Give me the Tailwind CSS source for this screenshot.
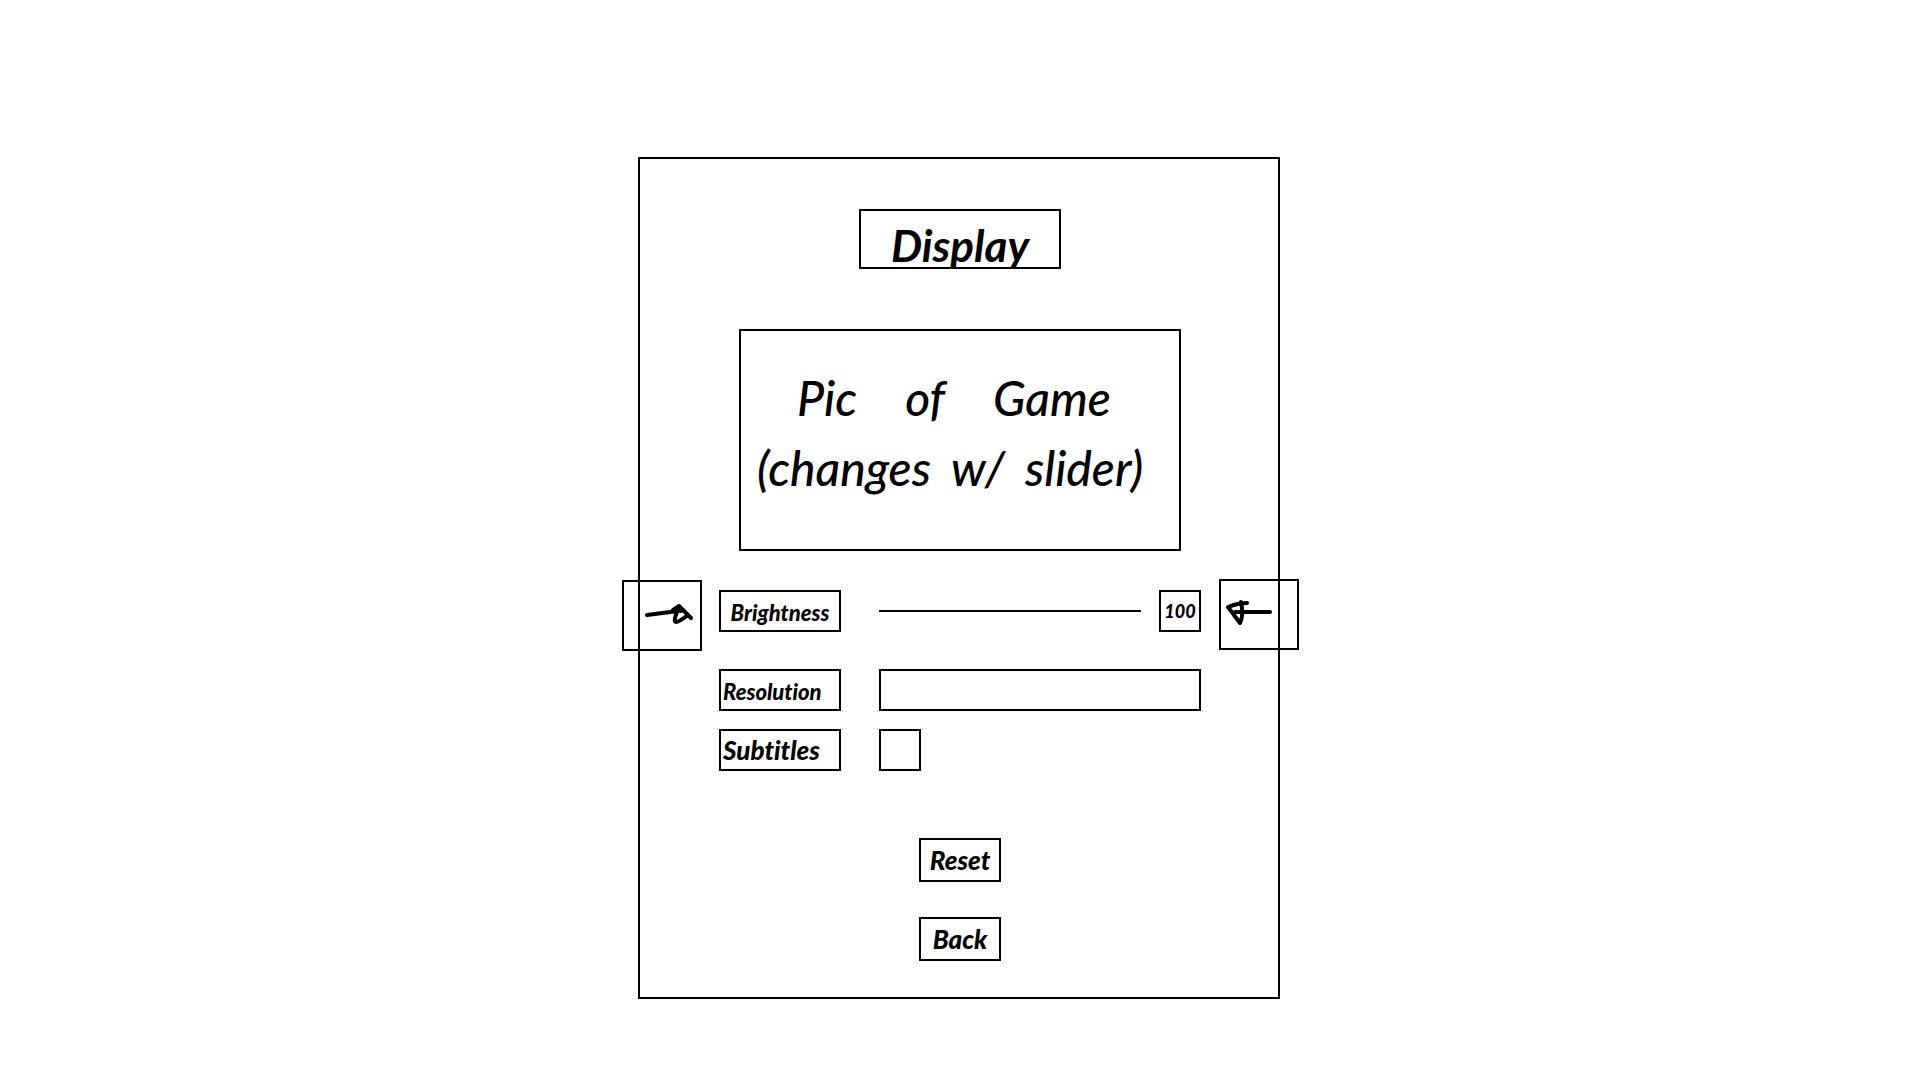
<!DOCTYPE html>
<html lang="en">
<head>
<meta charset="utf-8">
<meta name="viewport" content="width=device-width, initial-scale=1">
<title>Display settings</title>
<script src="https://cdn.jsdelivr.net/npm/@tailwindcss/browser@4"></script>
</head>
<body class="min-h-screen bg-white pt-[157px] pr-0.5 pb-20 font-['Lato',sans-serif] text-black italic [font-variant-ligatures:none]">
<main class="mx-auto flex w-full max-w-[642px] flex-col items-center border-2 border-black pt-[50px] pb-9 pl-0.5">
  <h1 class="flex h-[60px] w-[202px] items-center justify-center border-2 border-black pt-3 text-[44px] leading-none font-bold">Display</h1>

  <section class="mt-[60px] flex h-[222px] w-full max-w-[442px] flex-col border-2 border-black pt-8 pl-4 text-[48px] leading-[70px] font-medium">
    <p class="flex gap-12 pl-10"><span>Pic</span><span>of</span><span>Game</span></p>
    <p class="flex gap-5"><span>(changes</span><span>w/</span><span>slider)</span></p>
  </section>

  <form class="mt-[39px] flex w-full max-w-[482px] flex-col items-center">
    <div class="relative flex w-full items-center">
      <button type="button" aria-label="Next" class="absolute -top-2.5 -left-[97px] h-[71px] w-20 border-2 border-black">
        <svg viewBox="0 0 76 67" class="h-full w-full" fill="none" stroke="currentColor" stroke-width="4" stroke-linecap="round" stroke-linejoin="round"><path d="M23 33 L54 29 M49 28 L55 24 L67 36 M55 25 L53 30 Q49 40 52 40 Q55 40 64 33 M55 25 L57 29"/></svg>
      </button>
      <label for="brightness" class="flex h-[42px] w-[122px] items-center justify-center border-2 border-black pt-1 text-[22px] leading-none font-black">Brightness</label>
      <input id="brightness" type="range" min="0" max="100" value="100" class="ml-[38px] h-0.5 min-w-0 flex-1 appearance-none bg-black [&::-webkit-slider-thumb]:size-0 [&::-webkit-slider-thumb]:appearance-none">
      <output for="brightness" class="ml-[18px] flex size-[42px] items-center justify-center border-2 border-black text-[18px] leading-none font-black">100</output>
      <button type="button" aria-label="Previous" class="absolute -top-[11px] -right-[98px] h-[71px] w-20 border-2 border-black">
        <svg viewBox="0 0 76 67" class="h-full w-full" fill="none" stroke="currentColor" stroke-width="4" stroke-linecap="round" stroke-linejoin="round"><path d="M49 31 H14 M26 22 Q17 22 7 26 L19 42 Q23 34 20 21"/></svg>
      </button>
    </div>
    <div class="mt-[37px] flex w-full items-center">
      <label for="resolution" class="flex h-[42px] w-[122px] items-center border-2 border-black pt-1 pl-0.5 text-[22px] leading-none font-black">Resolution</label>
      <select id="resolution" class="ml-[38px] h-[42px] min-w-0 flex-1 appearance-none border-2 border-black bg-white"><option></option></select>
    </div>
    <div class="mt-[18px] flex w-full items-center">
      <label for="subtitles" class="flex h-[42px] w-[122px] items-center border-2 border-black pl-0.5 text-[26px] leading-none font-black">Subtitles</label>
      <input id="subtitles" type="checkbox" class="ml-[38px] size-[42px] appearance-none border-2 border-black checked:bg-black">
    </div>
    <button type="reset" class="mt-[67px] h-11 w-[82px] border-2 border-black text-[26px] leading-none font-black">Reset</button>
    <button type="button" class="mt-[35px] h-11 w-[82px] border-2 border-black text-[26px] leading-none font-black">Back</button>
  </form>
</main>
</body>
</html>
